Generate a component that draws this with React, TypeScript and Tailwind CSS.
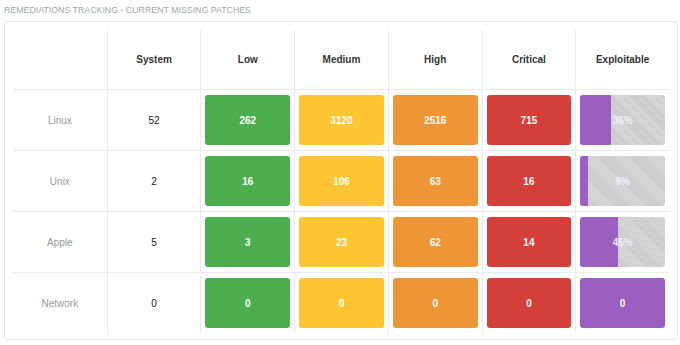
type Row = {
  name: string
  system: number
  low: number
  medium: number
  high: number
  critical: number
  exploitable: number | null
}

const rows: Row[] = [
  { name: 'Linux', system: 52, low: 262, medium: 3120, high: 2516, critical: 715, exploitable: 36 },
  { name: 'Unix', system: 2, low: 16, medium: 106, high: 63, critical: 16, exploitable: 9 },
  { name: 'Apple', system: 5, low: 3, medium: 23, high: 62, critical: 14, exploitable: 45 },
  { name: 'Network', system: 0, low: 0, medium: 0, high: 0, critical: 0, exploitable: null },
]

const headers = ['System', 'Low', 'Medium', 'High', 'Critical', 'Exploitable']

function Box({ value, color }: { value: number; color: string }) {
  return (
    <div className={`flex h-full items-center justify-center rounded-[3px] text-[10px] font-bold text-white ${color}`}>
      {value}
    </div>
  )
}

function Exploit({ pct }: { pct: number | null }) {
  if (pct === null) return <Box value={0} color="bg-[#9b5ec1]" />
  return (
    <div className="relative flex h-full overflow-hidden rounded-[3px] bg-[#cecece] bg-[linear-gradient(45deg,rgba(255,255,255,.12)_25%,transparent_25%,transparent_50%,rgba(255,255,255,.12)_50%,rgba(255,255,255,.12)_75%,transparent_75%,transparent)] bg-[length:32px_32px]">
      <div className="h-full bg-[#9b5ec1]" style={{ width: `${pct}%` }} />
      <span className="absolute inset-0 flex items-center justify-center text-[10px] font-bold text-[#eef0ff]">
        {pct}%
      </span>
    </div>
  )
}

export default function App() {
  return (
    <div className="h-[345px] w-[680px] bg-white px-1 font-['Liberation_Sans',Arial,sans-serif]">
      <div className="flex h-[21px] items-center text-[8.8px] uppercase text-[#9ea6ad]">
        Remediations Tracking - Current Missing Patches
      </div>
      <div className="w-[674px] rounded-[3px] border border-[#e6e6e6] px-[8px] pt-[8px] pb-[6px]">
        <div className="grid grid-cols-7">
          <div className="h-[60px] border-b border-[#ebebeb]" />
          {headers.map((h) => (
            <div
              key={h}
              className="flex h-[60px] items-center justify-center border-b border-l border-[#ebebeb] text-[10px] font-bold text-[#333]"
            >
              {h}
            </div>
          ))}
          {rows.map((r, i) => {
            const last = i === rows.length - 1
            const b = last ? 'h-[60px]' : 'h-[61px] border-b'
            return [
              <div key={r.name + 'n'} className={`flex items-center justify-center border-[#ebebeb] text-[10px] text-[#999] ${b}`}>
                {r.name}
              </div>,
              <div key={r.name + 's'} className={`flex items-center justify-center border-l border-[#ebebeb] text-[10px] text-[#222] ${b}`}>
                {r.system}
              </div>,
              <div key={r.name + 'l'} className={`border-l border-[#ebebeb] px-[4px] py-[5px] ${b}`}>
                <Box value={r.low} color="bg-[#4dae4f]" />
              </div>,
              <div key={r.name + 'm'} className={`border-l border-[#ebebeb] px-[4px] py-[5px] ${b}`}>
                <Box value={r.medium} color="bg-[#fdc531]" />
              </div>,
              <div key={r.name + 'h'} className={`border-l border-[#ebebeb] px-[4px] py-[5px] ${b}`}>
                <Box value={r.high} color="bg-[#ee9536]" />
              </div>,
              <div key={r.name + 'c'} className={`border-l border-[#ebebeb] px-[4px] py-[5px] ${b}`}>
                <Box value={r.critical} color="bg-[#d43f3a]" />
              </div>,
              <div key={r.name + 'e'} className={`border-l border-[#ebebeb] px-[4px] py-[5px] ${b}`}>
                <Exploit pct={r.exploitable} />
              </div>,
            ]
          })}
        </div>
      </div>
    </div>
  )
}
